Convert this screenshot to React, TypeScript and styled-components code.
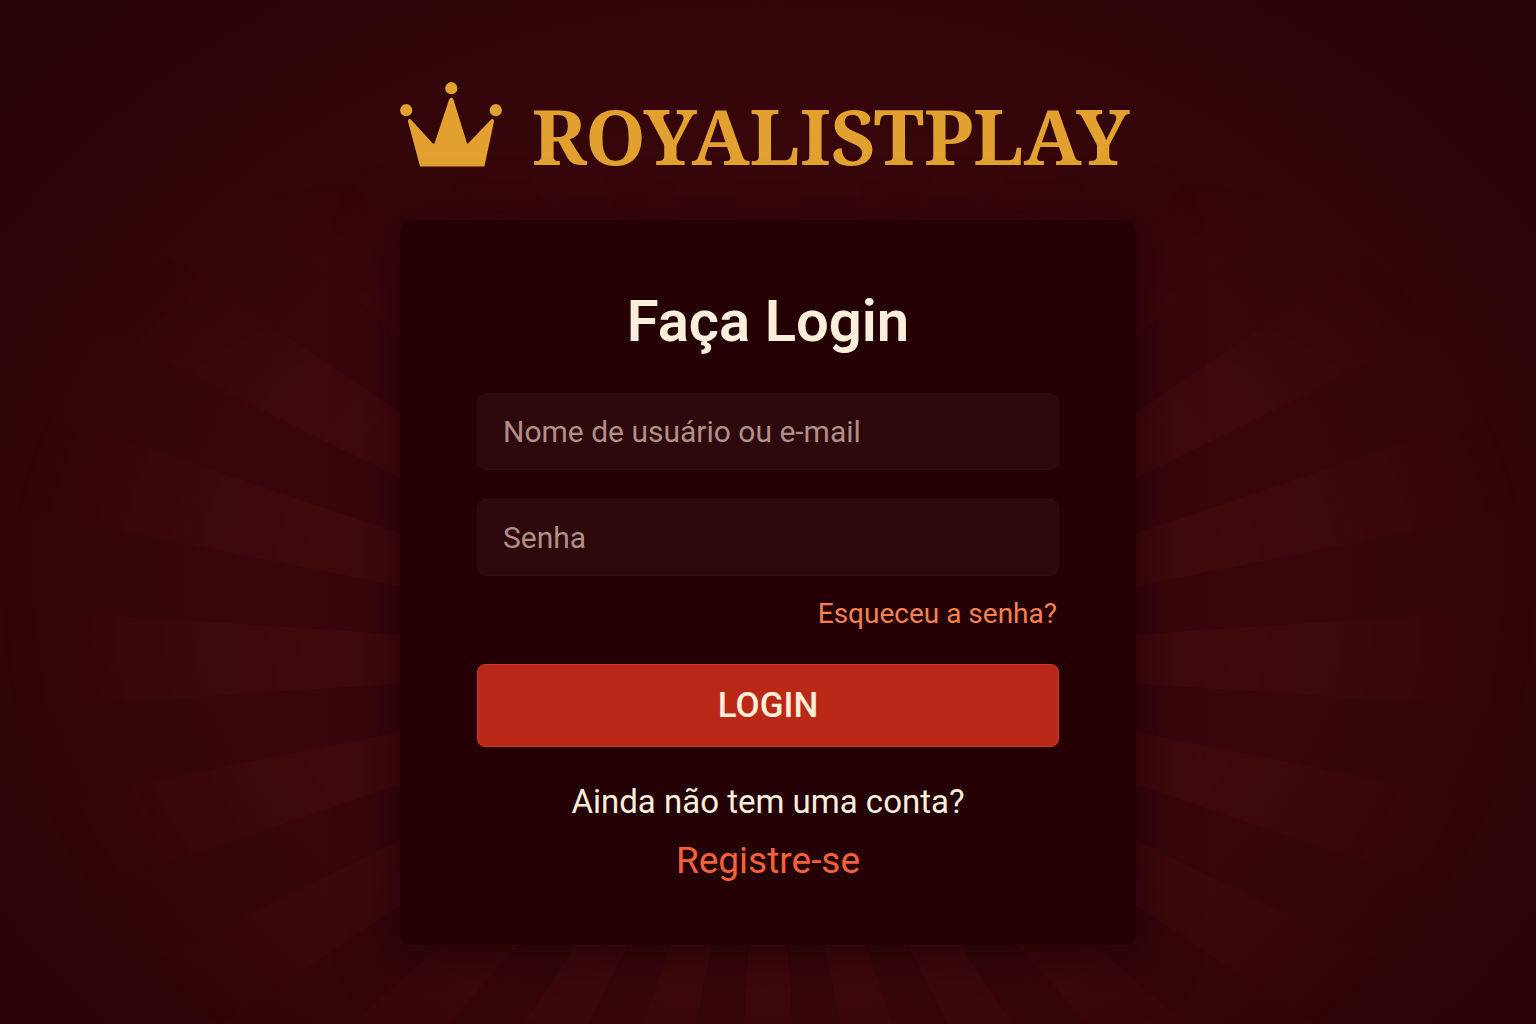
import React from "react";
import styled, { createGlobalStyle } from "styled-components";

const GlobalStyle = createGlobalStyle`
  *, *::before, *::after { box-sizing: border-box; }
  body {
    margin: 0;
    background: #2a0308;
    font-family: Roboto, "Liberation Sans", sans-serif;
  }
`;

const Page = styled.main`
  position: relative;
  isolation: isolate;
  min-height: 100vh;
  padding: 82px 24px 78px;
  display: flex;
  flex-direction: column;
  align-items: center;
  overflow: hidden;
  background: radial-gradient(ellipse 62% 72% at 50% 56%, #38060a 0%, #37060a 55%, #310508 78%, #2b0307 100%, #240207 125%);
`;

/* Sunburst behind the card: 24 rays from the centre, fading to the edges and the top. */
const Rays = styled.div`
  position: absolute;
  inset: 0;
  z-index: -1;
  background: repeating-conic-gradient(
    from 86.25deg at 50% 659px,
    rgba(120, 30, 30, 0.13) 0deg 7.5deg,
    transparent 7.6deg 14.9deg,
    rgba(120, 30, 30, 0.13) 15deg
  );
  mask-image:
    radial-gradient(ellipse 50% 58% at 50% 60%, #000 60%, transparent 100%),
    linear-gradient(to bottom, transparent 17%, #000 36%);
  mask-composite: intersect;
`;

const Brand = styled.header`
  width: 100%;
  max-width: 736px;
  display: flex;
  align-items: flex-end;
  gap: 30px;
  margin-bottom: 52px;
  color: #e2a02e;
`;

const Crown = styled.svg`
  flex: none;
  width: 102px;
  height: 86px;
  fill: currentColor;
`;

const Wordmark = styled.span`
  font-family: "Noto Serif", "DejaVu Serif Condensed", "DejaVu Serif", serif;
  font-size: 77px;
  font-weight: 700;
  line-height: 64px;
`;

const Card = styled.form`
  width: 100%;
  max-width: 736px;
  padding: 69px 77px 60px;
  display: flex;
  flex-direction: column;
  border-radius: 10px;
  background: #240004;
  box-shadow: 0 8px 56px 4px rgba(28, 0, 6, 0.65);
`;

const Title = styled.h1`
  margin: 0 0 40px;
  color: #fbeedb;
  font-size: 58px;
  font-weight: 600;
  line-height: 64px;
  text-align: center;
`;

const Fields = styled.div`
  display: flex;
  flex-direction: column;
  gap: 29px;
`;

const Field = styled.input`
  width: 100%;
  height: 77px;
  padding: 0 25px;
  border: 1px solid #300b0f;
  border-radius: 9px;
  background: #2d080c;
  color: #fbeedb;
  font: 400 30px/40px Roboto, "Liberation Sans", sans-serif;

  &::placeholder { color: #b08f87; opacity: 1; }
  &:focus-visible { outline: 2px solid #f8814f; }
`;

const ForgotLink = styled.a`
  align-self: flex-end;
  margin: 20px 2px 32px 0;
  color: #f8814f;
  font-size: 28px;
  line-height: 36px;
  text-decoration: none;
`;

const SubmitButton = styled.button`
  width: 100%;
  height: 83px;
  border: 1px solid #c93a2c;
  border-radius: 8px;
  background: #ba2917;
  color: #fdeed8;
  font: 500 35px/40px Roboto, "Liberation Sans", sans-serif;
  cursor: pointer;
`;

const SignUp = styled.div`
  margin-top: 31px;
  display: flex;
  flex-direction: column;
  align-items: center;
  gap: 11px;
  line-height: 48px;
`;

const Question = styled.p`
  margin: 0;
  color: #fbeedb;
  font-size: 33px;
`;

const RegisterLink = styled.a`
  color: #f2623a;
  font-size: 37px;
  text-decoration: none;
`;

export default function App() {
  return (
    <>
      <GlobalStyle />
      <Page>
        <Rays />
        <Brand>
          <Crown viewBox="0 0 102 86" aria-hidden="true">
            <circle cx="51.3" cy="6.2" r="6.1" />
            <circle cx="6.2" cy="28.2" r="6.1" />
            <circle cx="95.8" cy="28.2" r="6.1" />
            <path d="M20 84.6 8 39.6C7.4 37 9.8 36 11.4 37.9L32.6 61.2Q34 62.6 34.8 60.6L49.2 17.2Q51.3 13.8 53.4 17.2L66.7 60.4Q67.4 62.4 68.8 60.8L90.6 37.9C92.3 36 94.6 37 94 39.6L84.4 84.6Z" />
          </Crown>
          <Wordmark>ROYALISTPLAY</Wordmark>
        </Brand>
        <Card onSubmit={(event) => event.preventDefault()}>
          <Title>Faça Login</Title>
          <Fields>
            <Field type="text" name="username" autoComplete="username" aria-label="Nome de usuário ou e-mail" placeholder="Nome de usuário ou e-mail" />
            <Field type="password" name="password" autoComplete="current-password" aria-label="Senha" placeholder="Senha" />
          </Fields>
          <ForgotLink href="#recuperar">Esqueceu a senha?</ForgotLink>
          <SubmitButton type="submit">LOGIN</SubmitButton>
          <SignUp>
            <Question>Ainda não tem uma conta?</Question>
            <RegisterLink href="#registro">Registre-se</RegisterLink>
          </SignUp>
        </Card>
      </Page>
    </>
  );
}
